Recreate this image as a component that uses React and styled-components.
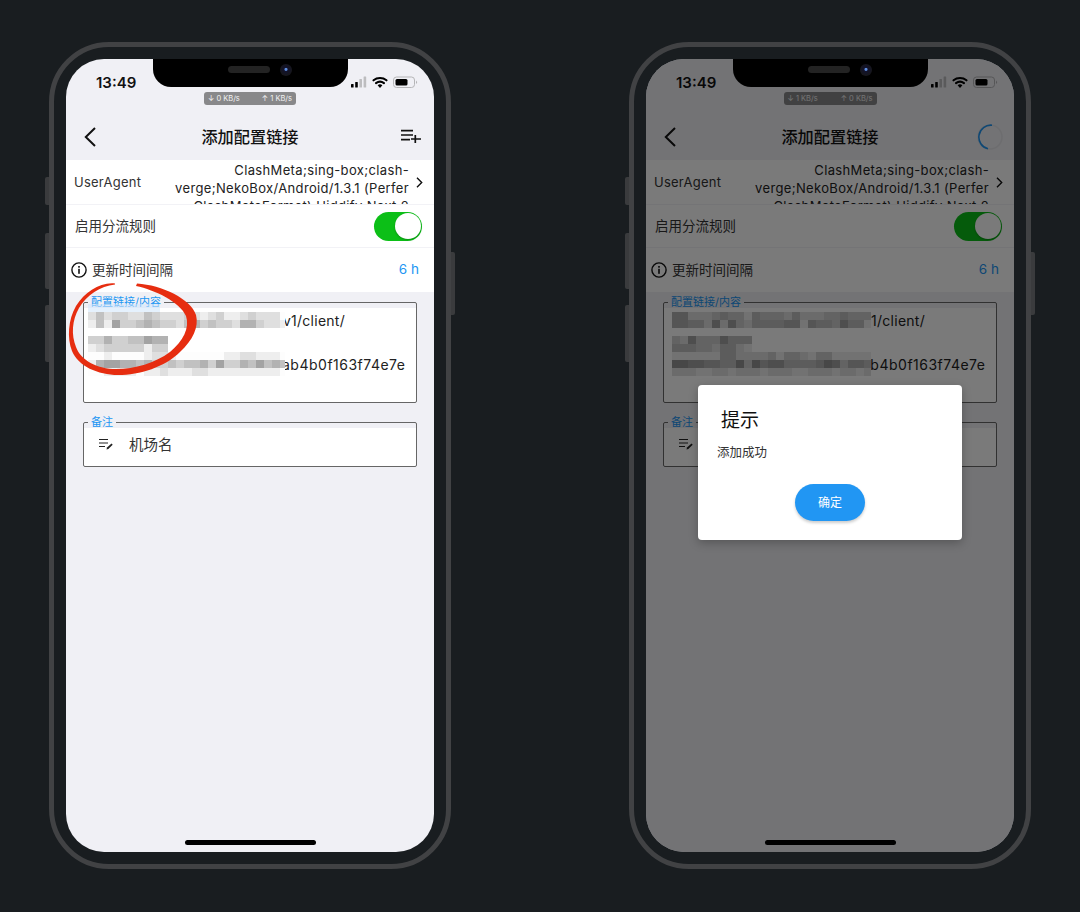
import React from "react";
import styled, { createGlobalStyle } from "styled-components";

const FONT = `Inter, "Noto Sans CJK SC", sans-serif`;

const GlobalStyle = createGlobalStyle`
  html, body {
    margin: 0;
    background: #191d20;
  }
  * {
    box-sizing: border-box;
  }
`;

const Page = styled.div`
  width: 1080px;
  height: 912px;
  padding: 42px 0 0 49px;
  display: flex;
  gap: 178px;
  font-family: ${FONT};
`;

const Frame = styled.div`
  position: relative;
  width: 402px;
  height: 827px;
  padding: 12px;
  border: 5px solid #414244;
  border-radius: 60px;
`;

const SideButton = styled.div`
  position: absolute;
  top: ${(p) => p.$top}px;
  height: ${(p) => p.$height}px;
  width: 4px;
  background: #3a3b3d;
  ${(p) => (p.$right ? "right: -9px; border-radius: 0 2px 2px 0;" : "left: -9px; border-radius: 2px 0 0 2px;")}
`;

const Screen = styled.div`
  position: relative;
  width: 368px;
  height: 793px;
  background: #f0f0f5;
  border-radius: 38px;
  overflow: hidden;
  display: flex;
  flex-direction: column;
`;

const Notch = styled.div`
  position: absolute;
  z-index: 3;
  top: 0;
  left: 87px;
  width: 195px;
  height: 28px;
  background: #000;
  border-radius: 0 0 18px 18px;
  display: flex;
  justify-content: center;
  align-items: flex-start;
  gap: 10px;
  padding: 7px 0 0 19px;
`;

const Speaker = styled.div`
  width: 42px;
  height: 7px;
  border-radius: 4px;
  background: #232323;
`;

const Camera = styled.div`
  width: 12px;
  height: 12px;
  margin-top: -2px;
  border-radius: 50%;
  background: radial-gradient(circle at 50% 45%, #5f8fe0 0 1px, #12122a 2px, #16161c 6px);
`;

const StatusBar = styled.div`
  height: 33px;
  padding: 14px 16px 0 30px;
  display: flex;
  justify-content: space-between;
  align-items: flex-start;
`;

const Clock = styled.span`
  font-size: 15px;
  line-height: 19px;
  font-weight: 600;
  color: #111;
`;

const StatusIcons = styled.svg`
  margin-top: 3px;
`;

const SpeedRow = styled.div`
  height: 13px;
  display: flex;
  justify-content: center;
`;

const SpeedPill = styled.div`
  width: ${(p) => p.$width}px;
  height: 13px;
  padding: 0 4px;
  border-radius: 3px;
  background: #88888a;
  color: #f2f2f2;
  font-size: 7.5px;
  line-height: 13px;
  display: flex;
  justify-content: space-between;
`;

const NavBar = styled.div`
  height: 55px;
  padding: 9px 11px 0;
  display: grid;
  grid-template-columns: 1fr auto 1fr;
  align-items: center;
`;

const NavSlot = styled.div`
  display: flex;
  justify-content: ${(p) => (p.$end ? "flex-end" : "flex-start")};
  padding-left: ${(p) => (p.$end ? 0 : 7)}px;
`;

const NavTitle = styled.h1`
  margin: 0;
  font-size: 16.2px;
  line-height: 22px;
  font-weight: 500;
  color: #111;
`;

const SettingRow = styled.div`
  height: ${(p) => p.$height}px;
  background: #fff;
  border-bottom: ${(p) => (p.$last ? "none" : "1px solid #f2f2f6")};
  display: flex;
  align-items: center;
  justify-content: space-between;
  padding: 0 ${(p) => p.$right || 12}px 0 ${(p) => p.$left || 9}px;
  color: #333;
  overflow: hidden;
`;

const UaLabel = styled.span`
  font-size: 13px;
  letter-spacing: 0.25px;
  flex: none;
  color: #333;
`;

const UaValue = styled.div`
  width: 250px;
  height: 44px;
  padding-top: 1px;
  margin: 0 7px 0 auto;
  text-align: right;
  font-size: 13px;
  letter-spacing: 0.35px;
  line-height: 18px;
  color: #222;
  overflow: hidden;
`;

const RowLabel = styled.span`
  font-size: 13.5px;
  margin-bottom: 2px;
  color: #333;
`;

const RowLead = styled.div`
  display: flex;
  align-items: center;
  gap: 5px;
`;

const Toggle = styled.div`
  width: 48px;
  height: 29px;
  padding: 1.5px;
  border-radius: 15px;
  background: #0cbf17;
  display: flex;
  justify-content: flex-end;
`;

const Knob = styled.div`
  width: 26px;
  height: 26px;
  border-radius: 50%;
  background: #fff;
  box-shadow: 0 1px 2px rgba(0, 0, 0, 0.25);
`;

const IntervalValue = styled.span`
  font-size: 13.5px;
  margin-bottom: 2px;
  color: #2196f3;
`;

const Form = styled.div`
  flex: 1;
  padding: 5px 17px 0;
  display: flex;
  flex-direction: column;
  gap: 14px;
`;

const Field = styled.fieldset`
  position: relative;
  height: ${(p) => p.$height}px;
  margin: 0;
  padding: 0;
  min-width: 0;
  background: linear-gradient(#0000 5px, #fff 5px);
  border: 1px solid #666;
  border-radius: 2px;
`;

const FieldLegend = styled.legend`
  margin-left: 4px;
  padding: 0 3px;
  font-size: 11px;
  line-height: 11px;
  color: #2196f3;
`;

const UrlBody = styled.div`
  padding-top: 2px;
`;

const UrlLine = styled.div`
  height: 22px;
  padding-left: ${(p) => p.$indent}px;
  font-size: 14px;
  letter-spacing: ${(p) => p.$tracking}px;
  line-height: 22px;
  color: #222;
  white-space: nowrap;
`;

const RemarkBody = styled.div`
  height: 31px;
  padding-left: 15px;
  display: flex;
  align-items: center;
  gap: 16px;
  font-size: 14.5px;
  color: #333;
`;

const MosaicSvg = styled.svg`
  position: absolute;
  top: -4px;
  left: ${(p) => p.$left}px;
  display: block;
  filter: blur(0.5px);
`;

const Scribble = styled.svg`
  position: absolute;
  left: 0;
  top: 221px;
`;

const HomeBar = styled.div`
  width: 131px;
  height: 5px;
  margin: 0 auto 7px;
  border-radius: 3px;
  background: #000;
`;

const Scrim = styled.div`
  position: absolute;
  inset: 0;
  z-index: 2;
  background: rgba(0, 0, 0, 0.52);
  display: flex;
  justify-content: center;
  align-items: flex-start;
  padding-top: 326px;
`;

const Dialog = styled.div`
  width: 264px;
  height: 155px;
  padding: 24px 0 0 19px;
  background: #fff;
  border-radius: 4px;
  box-shadow: 0 3px 10px rgba(0, 0, 0, 0.25);
`;

const DialogTitle = styled.h2`
  margin: 0 0 0 4px;
  font-size: 19px;
  line-height: 24px;
  font-weight: 400;
  color: #111;
`;

const DialogText = styled.p`
  margin: 12px 0 0;
  font-size: 12.5px;
  line-height: 16px;
  color: #333;
`;

const DialogActions = styled.div`
  margin: 23px 0 0 -19px;
  display: flex;
  justify-content: center;
`;

const ConfirmButton = styled.button`
  width: 70px;
  height: 37px;
  padding: 0 0 2px;
  border: none;
  border-radius: 19px;
  background: #2196f3;
  color: #fff;
  font-family: ${FONT};
  font-size: 12px;
  box-shadow: 0 2px 3px rgba(0, 0, 0, 0.2);
`;

const LEFT_MOSAIC = [
  "2423322432223212311232220",
  "1416334543324534332553221",
  "",
  "3353344655",
  "1233333133",
  "0010000122100000011221110",
  "1566554533434453633546454",
  "0011110112111221111111110",
];

const RIGHT_MOSAIC = [
  "5522234331433324222334333",
  "5544262632444455154436441",
  "",
  "3263336444",
  "4443324421",
  "1111114422223133213311111",
  "7766554473756644445763554",
  "2221122122212221122212212",
];

const Mosaic = ({ rows, left, width, tinted }) => (
  <MosaicSvg $left={left} width={width} height={72} viewBox={`0 -8 ${width} 72`}>
    {tinted && <rect x="0" y="-8" width="72" height="8" fill="#cfe6fb" opacity="0.55" />}
    {rows.map((row, y) =>
      row.split("").map((v, x) => {
        const g = 253 - Number(v) * 15;
        return <rect key={`${x}-${y}`} x={x * 8} y={y * 8} width="8" height="8" fill={`rgb(${g},${g},${g})`} />;
      })
    )}
  </MosaicSvg>
);

const SignalIcon = () => (
  <StatusIcons width="67" height="13" viewBox="0 0 67 13">
    <rect x="0" y="8" width="2.6" height="3.5" rx="0.6" fill="#000" />
    <rect x="4.2" y="6" width="2.6" height="5.5" rx="0.6" fill="#000" />
    <rect x="8.4" y="3" width="2.6" height="8.5" rx="0.6" fill="#bdbdbf" />
    <rect x="12.6" y="0.5" width="2.6" height="11" rx="0.6" fill="#bdbdbf" />
    <path d="M22.500 4.300a10.500 10.500 0 0 1 13 0M25 7.200a6.600 6.600 0 0 1 8 0" fill="none" stroke="#000" strokeWidth="2.1" strokeLinecap="round" />
    <path d="M29 12l-2.400-2.700a3.500 3.500 0 0 1 4.800 0z" fill="#000" />
    <rect x="42.5" y="1" width="21" height="10.5" rx="3" fill="none" stroke="#b5b5b7" />
    <rect x="44.5" y="3" width="12" height="6.5" rx="1.5" fill="#000" />
    <path d="M65 4.500a2 2 0 0 1 0 3.500z" fill="#b5b5b7" />
  </StatusIcons>
);

const BackIcon = () => (
  <svg width="12" height="20" viewBox="0 0 12 20">
    <path d="M11 1L1.800 10l9.200 9" fill="none" stroke="#111" strokeWidth="2" />
  </svg>
);

const AddListIcon = () => (
  <svg width="26" height="26" viewBox="0 0 26 26">
    <path d="M4 6.700h12M4 11h12M4 15.700h9M14 15h10M18.300 11v8" fill="none" stroke="#111" strokeWidth="1.700" />
  </svg>
);

const Spinner = () => (
  <svg width="26" height="26" viewBox="0 0 26 26">
    <circle cx="13" cy="13" r="12" fill="none" stroke="#e4e4e8" strokeWidth="1.5" />
    <path d="M15 1.200A12 12 0 0 0 11 24.800" fill="none" stroke="#2196f3" strokeWidth="1.600" />
  </svg>
);

const RowChevron = () => (
  <svg width="7" height="11" viewBox="0 0 7 11">
    <path d="M1 .8l4.700 4.700L1 10.200" fill="none" stroke="#111" strokeWidth="1.400" />
  </svg>
);

const InfoIcon = () => (
  <svg width="16" height="16" viewBox="0 0 16 16">
    <circle cx="8" cy="8" r="7.100" fill="none" stroke="#111" strokeWidth="1.400" />
    <rect x="7.200" y="6.800" width="1.600" height="5" fill="#111" />
    <rect x="7.200" y="4" width="1.600" height="1.700" fill="#111" />
  </svg>
);

const EditNoteIcon = () => (
  <svg width="14" height="12" viewBox="0 0 14 12">
    <path d="M0 1.500h9M0 5h9M0 8.500h6" fill="none" stroke="#222" strokeWidth="1.200" />
    <path d="M7.500 11.500l.5-2 4.500-4 1.200 1.300-4.400 4.100z" fill="#222" />
  </svg>
);

const RedCircle = () => (
  <Scribble width="140" height="100" viewBox="66 280 140 100">
    <path
      d="M115 283.500C100 282 85 292 76 306C68 320 67 338 72 351C78 366 98 375 118 375C140 375 165 367 180 352C193 340 199 327 196 315C191 299 162 285 137 283.500L136 286C155 290 180 302 186 316C190 328 183 341 170 352C155 363 135 369 116 369C98 369 81 361 76 347C71 335 72 320 79 308C87 295 100 286 115 284.500Z"
      fill="#e62d10"
    />
  </Scribble>
);

const Phone = ({ down, up, pillWidth, busy, mosaic, mosaicLeft, mosaicWidth, circled, dialog }) => (
  <Frame>
    <SideButton $top={130} $height={28} />
    <SideButton $top={186} $height={56} />
    <SideButton $top={258} $height={57} />
    <SideButton $right $top={205} $height={63} />
    <Screen>
      <Notch>
        <Speaker />
        <Camera />
      </Notch>
      <StatusBar>
        <Clock>13:49</Clock>
        <SignalIcon />
      </StatusBar>
      <SpeedRow>
        <SpeedPill $width={pillWidth}>
          <span>↓ {down} KB/s</span>
          <span>↑ {up} KB/s</span>
        </SpeedPill>
      </SpeedRow>
      <NavBar>
        <NavSlot>
          <BackIcon />
        </NavSlot>
        <NavTitle>添加配置链接</NavTitle>
        <NavSlot $end>{busy ? <Spinner /> : <AddListIcon />}</NavSlot>
      </NavBar>
      <SettingRow $height={45} $left={8} $right={11}>
        <UaLabel>UserAgent</UaLabel>
        <UaValue>ClashMeta;sing-box;clash-verge;NekoBox/Android/1.3.1 (Perfer ClashMetaFormat) Hiddify Next 2</UaValue>
        <RowChevron />
      </SettingRow>
      <SettingRow $height={43}>
        <RowLabel>启用分流规则</RowLabel>
        <Toggle>
          <Knob />
        </Toggle>
      </SettingRow>
      <SettingRow $height={44} $last $left={5} $right={15}>
        <RowLead>
          <InfoIcon />
          <RowLabel>更新时间间隔</RowLabel>
        </RowLead>
        <IntervalValue>6 h</IntervalValue>
      </SettingRow>
      <Form>
        <Field $height={106}>
          <FieldLegend>配置链接/内容</FieldLegend>
          <UrlBody>
            <UrlLine $indent={199} $tracking={0.25}>v1/client/</UrlLine>
            <UrlLine />
            <UrlLine $indent={198} $tracking={0.5}>ab4b0f163f74e7e</UrlLine>
          </UrlBody>
          <Mosaic rows={mosaic} left={mosaicLeft} width={mosaicWidth} tinted={circled} />
        </Field>
        <Field $height={50}>
          <FieldLegend>备注</FieldLegend>
          <RemarkBody>
            <EditNoteIcon />
            <span>机场名</span>
          </RemarkBody>
        </Field>
      </Form>
      <HomeBar />
      {circled && <RedCircle />}
      {dialog && (
        <Scrim>
          <Dialog>
            <DialogTitle>提示</DialogTitle>
            <DialogText>添加成功</DialogText>
            <DialogActions>
              <ConfirmButton>确定</ConfirmButton>
            </DialogActions>
          </Dialog>
        </Scrim>
      )}
    </Screen>
  </Frame>
);

const App = () => (
  <>
    <GlobalStyle />
    <Page>
      <Phone down={0} up={1} pillWidth={92} mosaic={LEFT_MOSAIC} mosaicLeft={4} mosaicWidth={197} circled />
      <Phone down={1} up={0} pillWidth={93} mosaic={RIGHT_MOSAIC} mosaicLeft={8} mosaicWidth={199} busy dialog />
    </Page>
  </>
);

export default App;
